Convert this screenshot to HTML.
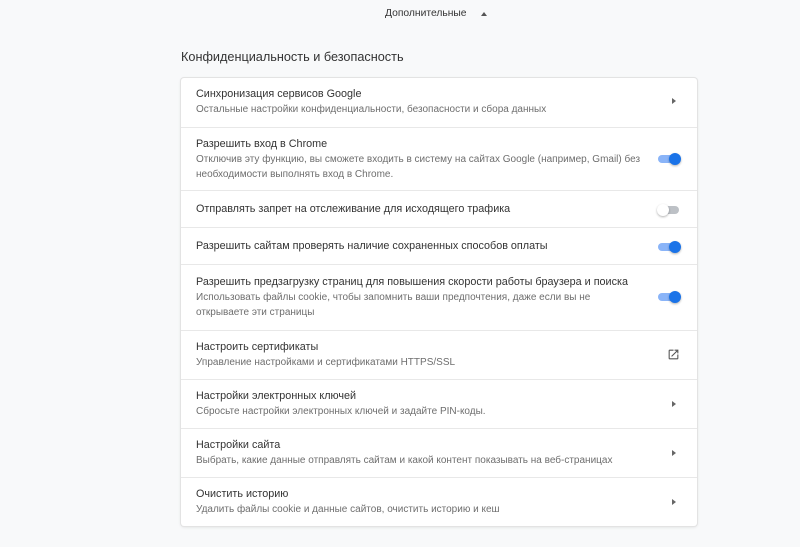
<!DOCTYPE html>
<html><head><meta charset="utf-8"><style>
body{margin:0;background:#f8f9fa;font-family:"Liberation Sans",sans-serif;width:800px;height:547px;overflow:hidden;position:relative}
.adv{position:absolute;top:8px;left:385px;font-size:10.3px;color:#333}
.adv span{position:absolute;left:96px;top:4px;width:0;height:0;border-left:3.5px solid transparent;border-right:3.5px solid transparent;border-bottom:4px solid #555}
.h{position:absolute;top:50px;left:181px;font-size:12.7px;color:#333}
.card{position:absolute;left:181px;top:78px;width:516px;height:448px;background:#fff;border-radius:3px;box-shadow:0 0 0 1px #e3e3e3,0 1px 3px rgba(0,0,0,.12)}
.row{position:absolute;left:0;right:0;border-top:1px solid #e8e8e8;box-sizing:border-box;padding-left:15px}
.row:first-child{border-top:none}
.t{font-size:10.8px;color:#333;line-height:15px}
.s{font-size:10px;color:#6e6e6e;line-height:15px}
.arr{position:absolute;right:21px;width:0;height:0;border-top:3.5px solid transparent;border-bottom:3.5px solid transparent;border-left:4px solid #666}
.tg{position:absolute;right:16px;width:24px;height:14px}
.tg .tr{position:absolute;left:1px;top:3px;width:21px;height:8px;border-radius:4px;background:#8ab4f8}
.tg .k{position:absolute;right:0;top:1px;width:12px;height:12px;border-radius:6px;background:#1a73e8;box-shadow:0 1px 2px rgba(0,0,0,.3)}
.tg.off .tr{background:#bdc1c6}
.tg.off .k{left:0;right:auto;background:#fff}
</style></head><body>
<div class="adv">Дополнительные<span></span></div>
<div class="h">Конфиденциальность и безопасность</div>
<div class="card">
<div class="row" style="top:0;height:49px;padding-top:9px"><div class="t">Синхронизация сервисов Google</div><div class="s">Остальные настройки конфиденциальности, безопасности и сбора данных</div><div class="arr" style="top:20px"></div></div>
<div class="row" style="top:49px;height:63px;padding-top:9px"><div class="t">Разрешить вход в Chrome</div><div class="s">Отключив эту функцию, вы сможете входить в систему на сайтах Google (например, Gmail) без<br>необходимости выполнять вход в Chrome.</div><div class="tg" style="top:24px"><div class="tr"></div><div class="k"></div></div></div>
<div class="row" style="top:112px;height:37px;padding-top:11px"><div class="t">Отправлять запрет на отслеживание для исходящего трафика</div><div class="tg off" style="top:12px"><div class="tr"></div><div class="k"></div></div></div>
<div class="row" style="top:149px;height:37px;padding-top:11px"><div class="t">Разрешить сайтам проверять наличие сохраненных способов оплаты</div><div class="tg" style="top:12px"><div class="tr"></div><div class="k"></div></div></div>
<div class="row" style="top:186px;height:66px;padding-top:10px"><div class="t">Разрешить предзагрузку страниц для повышения скорости работы браузера и поиска</div><div class="s">Использовать файлы cookie, чтобы запомнить ваши предпочтения, даже если вы не<br>открываете эти страницы</div><div class="tg" style="top:25px"><div class="tr"></div><div class="k"></div></div></div>
<div class="row" style="top:252px;height:49px;padding-top:9px"><div class="t">Настроить сертификаты</div><div class="s">Управление настройками и сертификатами HTTPS/SSL</div>
<svg style="position:absolute;right:17px;top:17px" width="13" height="13" viewBox="0 0 24 24"><path d="M19 19H5V5h7V3H5a2 2 0 0 0-2 2v14a2 2 0 0 0 2 2h14a2 2 0 0 0 2-2v-7h-2v7zM14 3v2h3.59l-9.83 9.830 1.41 1.41L19 6.41V10h2V3h-7z" fill="#555"/></svg></div>
<div class="row" style="top:301px;height:49px;padding-top:9px"><div class="t">Настройки электронных ключей</div><div class="s">Сбросьте настройки электронных ключей и задайте PIN-коды.</div><div class="arr" style="top:21px"></div></div>
<div class="row" style="top:350px;height:49px;padding-top:9px"><div class="t">Настройки сайта</div><div class="s">Выбрать, какие данные отправлять сайтам и какой контент показывать на веб-страницах</div><div class="arr" style="top:21px"></div></div>
<div class="row" style="top:399px;height:49px;padding-top:9px"><div class="t">Очистить историю</div><div class="s">Удалить файлы cookie и данные сайтов, очистить историю и кеш</div><div class="arr" style="top:21px"></div></div>
</div>
</body></html>
